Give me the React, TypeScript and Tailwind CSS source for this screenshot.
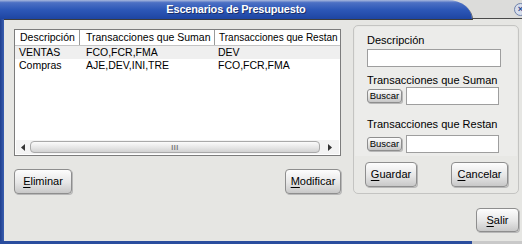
import React from 'react';

const rows = [
  { desc: 'VENTAS', suman: 'FCO,FCR,FMA', restan: 'DEV' },
  { desc: 'Compras', suman: 'AJE,DEV,INI,TRE', restan: 'FCO,FCR,FMA' },
];

function WinButton({ label, className = '' }: { label: string; className?: string }) {
  return (
    <button
      type="button"
      className={`flex items-center justify-center rounded-[4px] border border-[#8e8e8e] bg-[linear-gradient(to_bottom,#fdfdfd,#e6e6e6_55%,#c8c8c8)] shadow-[1px_1px_0_#b8b8b8] text-[11px] leading-none text-black ${className}`}
    >
      <span className="underline underline-offset-[2px]">{label[0]}</span>
      {label.slice(1)}
    </button>
  );
}

function SmallButton({ label }: { label: string }) {
  return (
    <button
      type="button"
      className="flex h-[14px] w-[35px] shrink-0 items-center justify-center rounded-[3px] border border-[#8e8e8e] bg-[linear-gradient(to_bottom,#fdfdfd,#e2e2e2_55%,#c6c6c6)] shadow-[1px_1px_0_#b8b8b8] text-[9.5px] leading-none text-black"
    >
      {label}
    </button>
  );
}

function Field({ className = '' }: { className?: string }) {
  return <div className={`h-[18px] border border-[#9e9e9e] bg-white ${className}`} />;
}

export default function App() {
  return (
    <div className="flex h-[244px] w-[522px] flex-col overflow-hidden bg-[#e6e6e3] font-['Liberation_Sans',Arial,sans-serif] text-black">
      {/* title bar */}
      <div className="flex h-[19px] shrink-0 bg-[#dcdcda]">
        <div className="flex w-[472px] items-center justify-center rounded-tr-[24px_19px] bg-[linear-gradient(to_bottom,#a8b8dd_0%,#4c70c4_14%,#2d58b8_50%,#1e45a2_100%)] shadow-[1px_1px_0_#3c3c3c]">
          <span className="text-[11px] font-bold tracking-[-0.2px] text-white [text-shadow:1px_1px_0_#1a2f6a]">
            Escenarios de Presupuesto
          </span>
        </div>
        <div className="relative flex-1 overflow-hidden border-b border-[#4a4a4a]">
          <div className="absolute left-[42px] top-[3px] flex h-[13px] w-[13px] items-center justify-center rounded-full border border-[#6f82aa] bg-[#d7deec] text-[9px] font-bold leading-none text-[#2b4a8f]">
            ×
          </div>
        </div>
      </div>

      <div className="flex min-h-0 flex-1">
        <div className="w-[4px] shrink-0 bg-[linear-gradient(to_right,#1f3f8f,#3a5fb0)]" />
        <div className="flex flex-1 flex-col pl-[10px] pr-[9px] pt-[6px] pb-[9px]">
          <div className="flex items-start gap-[12px]">
            {/* left column */}
            <div className="mt-[4px] flex w-[327px] flex-col">
              <div className="flex h-[127px] flex-col border border-[#7c7c7c] bg-white">
                <div className="flex h-[16px] shrink-0 items-center border-b border-[#c4c4c4] text-[10.5px] leading-none">
                  <div className="flex h-full w-[65px] items-center border-r border-[#9a9a9a] pl-[5px]">Descripción</div>
                  <div className="flex h-full w-[135px] items-center border-r border-[#9a9a9a] pl-[6px]">Transacciones que Suman</div>
                  <div className="flex h-full min-w-0 flex-1 items-center whitespace-nowrap pl-[4px] text-[10px]">Transacciones que Restan</div>
                </div>
                <div className="flex-1">
                  {rows.map((r, i) => (
                    <div
                      key={r.desc}
                      className={`flex h-[13px] items-center text-[10.5px] leading-none ${i === 0 ? 'bg-[#efefef]' : ''}`}
                    >
                      <div className="w-[65px] pl-[4px]">{r.desc}</div>
                      <div className="w-[135px] pl-[6px]">{r.suman}</div>
                      <div className="flex-1 pl-[3px]">{r.restan}</div>
                    </div>
                  ))}
                </div>
                {/* horizontal scrollbar */}
                <div className="mx-[1px] mb-[1px] flex h-[14px] shrink-0 items-center bg-[#f3f3f3]">
                  <div className="flex w-[14px] items-center justify-center">
                    <svg width="4" height="7" viewBox="0 0 4 7"><path d="M4 0 L0 3.5 L4 7 Z" fill="#333" /></svg>
                  </div>
                  <div className="flex h-[12px] w-[290px] items-center justify-center rounded-[4px] border border-[#a9a9a9] bg-[linear-gradient(to_bottom,#fbfbfb,#e4e4e4_60%,#d2d2d2)]">
                    <span className="text-[7px] font-bold leading-none tracking-[0.5px] text-[#777]">III</span>
                  </div>
                  <div className="flex flex-1 items-center justify-center">
                    <svg width="4" height="7" viewBox="0 0 4 7"><path d="M0 0 L4 3.5 L0 7 Z" fill="#333" /></svg>
                  </div>
                </div>
              </div>
              <div className="mt-[13px] flex justify-between">
                <WinButton label="Eliminar" className="h-[25px] w-[58px]" />
                <WinButton label="Modificar" className="h-[25px] w-[56px]" />
              </div>
            </div>

            {/* right panel */}
            <div className="flex h-[169px] w-[166px] flex-col rounded-[5px] border border-[#c4c4c2] bg-[#e8e8e5]">
              <div className="mx-[1px] mt-[1px] flex h-[129px] flex-col rounded-t-[4px] bg-[#ececea] pl-[12px] pr-[18px] pt-[7px] text-[11px] leading-[12px]">
                <span>Descripción</span>
                <Field className="mt-[3px] w-[134px]" />
                <span className="mt-[7px]">Transacciones que Suman</span>
                <div className="mt-[1px] flex items-center gap-[4px]">
                  <SmallButton label="Buscar" />
                  <Field className="flex-1" />
                </div>
                <span className="mt-[13px]">Transacciones que Restan</span>
                <div className="mt-[5px] flex items-center gap-[4px]">
                  <SmallButton label="Buscar" />
                  <Field className="flex-1" />
                </div>
              </div>
              <div className="mt-[6px] flex justify-between pl-[11px] pr-[10px]">
                <WinButton label="Guardar" className="h-[25px] w-[52px]" />
                <WinButton label="Cancelar" className="h-[25px] w-[57px]" />
              </div>
            </div>
          </div>

          <div className="mt-auto flex justify-end">
            <WinButton label="Salir" className="h-[24px] w-[43px]" />
          </div>
        </div>
      </div>

      <div className="flex h-[3px] shrink-0">
        <div className="w-[472px] bg-[#2a4d9e]" />
        <div className="flex-1 bg-[#c9c9c9]" />
      </div>
    </div>
  );
}
